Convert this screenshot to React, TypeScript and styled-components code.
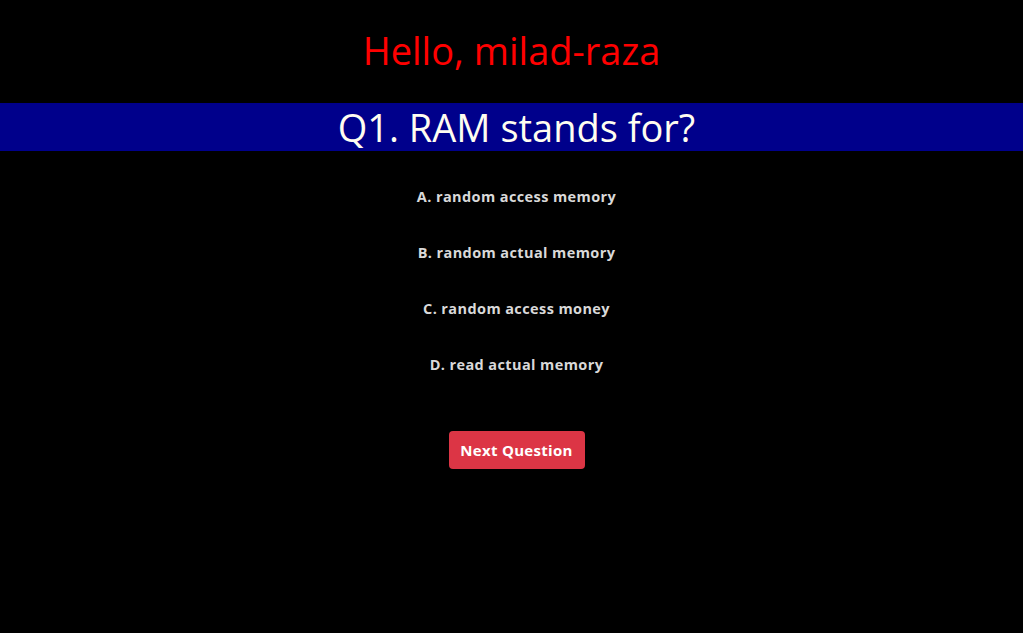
import React from "react";
import styled, { createGlobalStyle } from "styled-components";

const Global = createGlobalStyle`
  html, body { margin: 0; padding: 0; background: #000; }
  body { font-family: "Open Sans", "Noto Sans", sans-serif; }
`;

const Page = styled.div`
  min-height: 633px;
  background: #000;
  display: flex;
  flex-direction: column;
  align-items: stretch;
  padding-top: 26px;
`;

const Greeting = styled.h1`
  margin: 0;
  text-align: center;
  color: #ff0000;
  font-weight: 400;
  font-size: 38px;
  line-height: 48px;
  height: 77px;
`;

const QuestionBar = styled.h2`
  margin: 0;
  background: #00008b;
  color: #fffdf0;
  text-align: center;
  font-weight: 400;
  font-size: 38px;
  line-height: 48px;
  height: 48px;
  padding-left: 10px;
`;

const Body = styled.div`
  display: flex;
  flex-direction: column;
  align-items: center;
  padding-left: 10px;
`;

const Options = styled.ul`
  list-style: none;
  margin: 0;
  padding: 0;
  margin-top: 35px;
  display: flex;
  flex-direction: column;
  align-items: center;
  gap: 34px;
`;

const Option = styled.li`
  color: #d9d9d9;
  font-weight: 700;
  font-size: 14.5px;
  line-height: 22px;
  letter-spacing: 0.4px;
`;

const Next = styled.button`
  margin-top: 55px;
  width: 136px;
  height: 38px;
  border: none;
  border-radius: 4px;
  background: #dc3545;
  color: #fff;
  font-family: inherit;
  font-weight: 700;
  font-size: 15px;
  letter-spacing: 0.3px;
  cursor: pointer;
`;

const options = [
  "A. random access memory",
  "B. random actual memory",
  "C. random access money",
  "D. read actual memory",
];

export default function App() {
  return (
    <>
      <Global />
      <Page>
        <Greeting>Hello, milad-raza</Greeting>
        <QuestionBar>Q1. RAM stands for?</QuestionBar>
        <Body>
          <Options>
            {options.map((o) => (
              <Option key={o}>{o}</Option>
            ))}
          </Options>
          <Next>Next Question</Next>
        </Body>
      </Page>
    </>
  );
}
